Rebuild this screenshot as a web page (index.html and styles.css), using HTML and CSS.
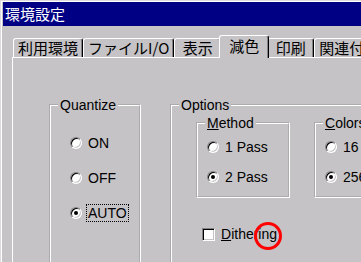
FILE: index.html
```html
<!DOCTYPE html>
<html lang="ja">
<head>
  <meta charset="UTF-8" />
  <title>環境設定</title>
  <link rel="stylesheet" href="styles.css">
</head>
<body>
  <div class="window">
    <div class="titlebar">環境設定</div>

    <div class="tabs">
      <div class="tab">利用環境</div>
      <div class="tab">ファイルI/O</div>
      <div class="tab">表示</div>
      <div class="tab active">減色</div>
      <div class="tab">印刷</div>
      <div class="tab">関連付け</div>
    </div>

    <div class="panel">
      <fieldset class="group quantize">
        <legend>Quantize</legend>
        <div class="items">
          <label class="radio"><span class="dot"></span><span class="text">ON</span></label>
          <label class="radio"><span class="dot"></span><span class="text">OFF</span></label>
          <label class="radio on focus"><span class="dot"></span><span class="text">AUTO</span></label>
        </div>
      </fieldset>

      <fieldset class="group options">
        <legend>Options</legend>
        <div class="body">
          <div class="subgroups">
            <fieldset class="group small">
              <legend><u>M</u>ethod</legend>
              <div class="items">
                <label class="radio"><span class="dot"></span><span class="text">1 Pass</span></label>
                <label class="radio on"><span class="dot"></span><span class="text">2 Pass</span></label>
              </div>
            </fieldset>
            <fieldset class="group small">
              <legend><u>C</u>olors</legend>
              <div class="items">
                <label class="radio"><span class="dot"></span><span class="text">16 Colors</span></label>
                <label class="radio on"><span class="dot"></span><span class="text">256 Colors</span></label>
              </div>
            </fieldset>
          </div>

          <label class="check">
            <span class="box"></span>
            <span class="text"><u>D</u>ithering<span class="mark"></span></span>
          </label>
        </div>
      </fieldset>
    </div>
  </div>
</body>
</html>
```

FILE: styles.css
```css
body {
  margin: 0;
  font-family: "Liberation Sans", "Noto Sans CJK JP", sans-serif;
  font-size: 14px;
  color: #000;
}

.window {
  width: 361px;
  height: 262px;
  box-sizing: border-box;
  overflow: hidden;
  background: #c6c3c6;
  border-top: 1px solid #dedbde;
  border-left: 1px solid #dedbde;
  box-shadow: inset 1px 1px #fff;
  padding: 1px 0 0 2px;
}

/* Title bar */
.titlebar {
  height: 24px;
  padding-left: 2px;
  background: #000084;
  color: #fff;
  font-family: "Noto Sans CJK JP", sans-serif;
  font-size: 15px;
  line-height: 24px;
}

/* Tabs */
.tabs {
  display: flex;
  align-items: flex-end;
  height: 22px;
  margin-top: 9px;
  padding-left: 10px;
  white-space: nowrap;
}

.tab {
  flex-shrink: 0;
  height: 19px;
  min-width: 47px;
  box-sizing: border-box;
  padding: 0 4px;
  text-align: center;
  font-family: "Noto Sans CJK JP", sans-serif;
  font-size: 15px;
  line-height: 18px;
  border-top: 1px solid #fff;
  border-left: 1px solid #fff;
  border-right: 1px solid #000;
  border-radius: 3px 3px 0 0;
  box-shadow: inset -1px 0 #848284;
}

.tab.active {
  position: relative;
  z-index: 1;
  height: 23px;
  min-width: 50px;
  margin: 0 -2px -1px;
  background: #c6c3c6;
  line-height: 19px;
}

/* Tab page */
.panel {
  display: flex;
  align-items: flex-start;
  gap: 29px;
  height: 300px;
  margin-left: 9px;
  padding: 39px 0 0 36px;
  border-top: 1px solid #fff;
  border-left: 1px solid #fff;
}

.group {
  margin: 0;
  padding: 0;
  min-width: 0;
  border: 2px groove #fff;
}

.group legend {
  margin-left: 7px;
  padding: 0 2px;
  line-height: 16px;
}

.quantize {
  flex-shrink: 0;
  width: 92px;
  height: 260px;
  box-sizing: border-box;
}

.quantize .items {
  display: flex;
  flex-direction: column;
  gap: 17px;
  padding: 21px 0 0 19px;
}

.options {
  flex-shrink: 0;
  width: 260px;
  height: 260px;
  box-sizing: border-box;
}

.options .body {
  padding: 2px 0 0 24px;
}

.subgroups {
  display: flex;
  gap: 24px;
}

.small {
  flex-shrink: 0;
  width: 94px;
  box-sizing: border-box;
}

.small .items {
  display: flex;
  flex-direction: column;
  gap: 12px;
  padding: 7px 0 10px 9px;
}

/* Radios and checkbox */
.radio,
.check {
  display: flex;
  align-items: center;
  gap: 4px;
  height: 18px;
  white-space: nowrap;
}

.dot {
  position: relative;
  flex-shrink: 0;
  width: 12px;
  height: 12px;
  box-sizing: border-box;
  border-radius: 50%;
  background: #fff;
  border: 1px solid;
  border-color: #848284 #fff #fff #848284;
  box-shadow: inset 1px 1px 0 #000, inset -1px -1px 0 #c6c3c6;
}

.radio.on .dot::after {
  content: "";
  position: absolute;
  left: 3px;
  top: 3px;
  width: 4px;
  height: 4px;
  border-radius: 50%;
  background: #000;
}

.text {
  position: relative;
  padding: 0 1px;
  line-height: 16px;
  border: 1px dotted transparent;
}

.focus .text {
  border-color: #000;
}

.check {
  margin: 27px 0 0 6px;
}

.box {
  flex-shrink: 0;
  width: 13px;
  height: 13px;
  box-sizing: border-box;
  background: #fff;
  border: 1px solid;
  border-color: #848284 #fff #fff #848284;
  box-shadow: inset 1px 1px 0 #000, inset -1px -1px 0 #c6c3c6;
}

/* red marker circle drawn over the label */
.mark {
  position: absolute;
  left: 34px;
  top: -4px;
  width: 28px;
  height: 28px;
  box-sizing: border-box;
  border: 3px solid #f00;
  border-radius: 50%;
}
```
